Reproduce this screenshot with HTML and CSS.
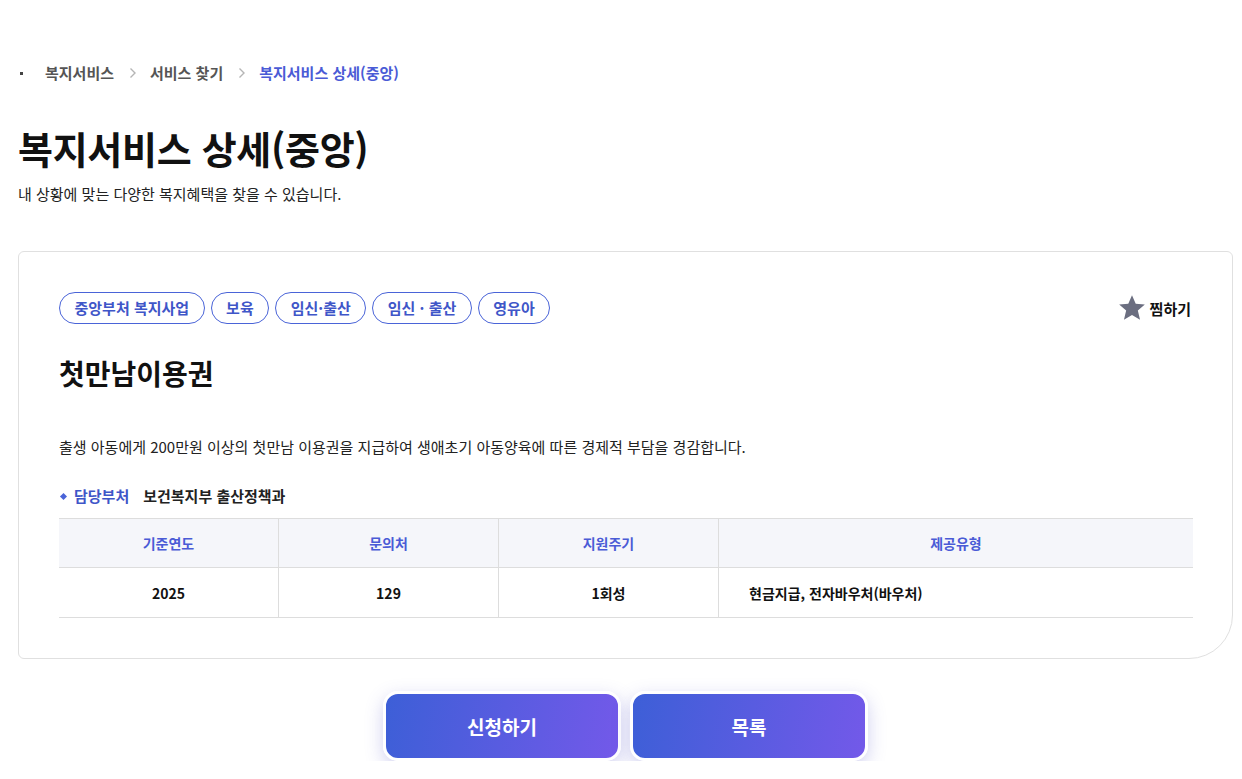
FILE: index.html
```html
<!DOCTYPE html>
<html lang="ko">
<head>
    <meta charset="UTF-8">
    <meta name="viewport" content="width=device-width, initial-scale=1.0">
    <title>복지서비스 상세(중앙)</title>
    <link rel="stylesheet" href="styles.css">
</head>
<body>
    <div class="container">
        <nav class="breadcrumb">
            <span class="home-dot"></span>
            <a href="#">복지서비스</a>
            <svg class="sep" width="8" height="12" viewBox="0 0 8 12"><path d="M1.5 1.5L6 6l-4.5 4.5" fill="none" stroke="#b5b5b5" stroke-width="1.4"/></svg>
            <a href="#">서비스 찾기</a>
            <svg class="sep" width="8" height="12" viewBox="0 0 8 12"><path d="M1.5 1.5L6 6l-4.5 4.5" fill="none" stroke="#b5b5b5" stroke-width="1.4"/></svg>
            <a href="#" class="current">복지서비스 상세(중앙)</a>
        </nav>

        <h1 class="page-title">복지서비스 상세(중앙)</h1>
        <p class="page-desc">내 상황에 맞는 다양한 복지혜택을 찾을 수 있습니다.</p>

        <div class="card">
            <div class="card-top">
                <div class="tags">
                    <span class="tag">중앙부처 복지사업</span>
                    <span class="tag">보육</span>
                    <span class="tag">임신·출산</span>
                    <span class="tag">임신 · 출산</span>
                    <span class="tag">영유아</span>
                </div>
                <button class="fav">
                    <svg width="28" height="28" viewBox="0 0 24 24"><path d="M12 1l3.2 7.4 7.8.6-6 5.2 1.9 7.8L12 17.9 5.1 22l1.9-7.8-6-5.2 7.8-.6z" fill="#6b6e80"/></svg>
                    찜하기
                </button>
            </div>

            <h2 class="service-name">첫만남이용권</h2>
            <p class="service-desc">출생 아동에게 200만원 이상의 첫만남 이용권을 지급하여 생애초기 아동양육에 따른 경제적 부담을 경감합니다.</p>

            <div class="dept">
                <span class="dept-label">담당부처</span>
                <span class="dept-name">보건복지부 출산정책과</span>
            </div>

            <table class="info-table">
                <thead>
                    <tr>
                        <th class="c1">기준연도</th>
                        <th class="c2">문의처</th>
                        <th class="c3">지원주기</th>
                        <th>제공유형</th>
                    </tr>
                </thead>
                <tbody>
                    <tr>
                        <td>2025</td>
                        <td>129</td>
                        <td>1회성</td>
                        <td class="left">현금지급, 전자바우처(바우처)</td>
                    </tr>
                </tbody>
            </table>
        </div>

        <div class="actions">
            <button class="btn">신청하기</button>
            <button class="btn">목록</button>
        </div>
    </div>
</body>
</html>
```

FILE: styles.css
```css
body {
    font-family: "Noto Sans CJK KR", "Noto Sans", sans-serif;
    margin: 0;
    padding: 0;
    background-color: #ffffff;
    color: #111111;
}
.container {
    padding: 63px 9px 0 18px;
}
.breadcrumb {
    display: flex;
    align-items: center;
    font-size: 15px;
    line-height: 20px;
    font-weight: 700;
}
.breadcrumb a {
    color: #555555;
    text-decoration: none;
}
.breadcrumb a.current {
    color: #4a5bd6;
}
.home-dot {
    width: 3px;
    height: 3px;
    background-color: #444444;
    margin: 0 22px 0 2px;
}
.sep {
    margin: 0 13px 0 15px;
}
.page-title {
    margin: 42px 0 0;
    font-size: 38px;
    line-height: 46px;
    font-weight: 700;
    letter-spacing: -0.3px;
}
.page-desc {
    margin: 13px 0 0;
    font-size: 15px;
    line-height: 20px;
    color: #222222;
}
.card {
    margin-top: 47px;
    border: 1px solid #e0e0e0;
    border-radius: 6px 6px 44px 6px;
    padding: 40px 39px 40px 40px;
}
.card-top {
    display: flex;
    justify-content: space-between;
    align-items: center;
}
.tags {
    display: flex;
    gap: 6px;
}
.tag {
    height: 30px;
    line-height: 30px;
    padding: 0 14.5px;
    border: 1px solid #4a64d8;
    border-radius: 16px;
    color: #3f56c8;
    font-size: 15px;
    font-weight: 700;
}
.fav {
    display: flex;
    align-items: center;
    gap: 4px;
    background: none;
    border: none;
    padding: 0 2px 0 0;
    font-family: inherit;
    font-size: 15px;
    font-weight: 700;
    color: #111111;
    cursor: pointer;
}
.service-name {
    margin: 29px 0 0;
    font-size: 28px;
    line-height: 40px;
    font-weight: 700;
}
.service-desc {
    margin: 43px 0 0;
    font-size: 15px;
    line-height: 22px;
    color: #222222;
}
.dept {
    margin-top: 27px;
    display: flex;
    align-items: center;
    font-size: 15px;
    line-height: 22px;
    font-weight: 700;
}
.dept-label {
    color: #3f56c8;
    padding-left: 15px;
    position: relative;
}
.dept-label::before {
    content: "";
    position: absolute;
    left: 2px;
    top: 9px;
    width: 5px;
    height: 5px;
    background-color: #4a64d8;
    transform: rotate(45deg);
}
.dept-name {
    margin-left: 14px;
    color: #222222;
}
.info-table {
    width: 100%;
    margin-top: 11px;
    border-collapse: collapse;
    font-size: 14px;
}
.info-table th, .info-table td {
    height: 49px;
    padding: 0;
    text-align: center;
    border-bottom: 1px solid #dddddd;
    border-left: 1px solid #dddddd;
}
.info-table th {
    height: 48px;
}
.info-table th:first-child, .info-table td:first-child {
    border-left: none;
}
.info-table th {
    background-color: #f5f6fa;
    color: #4a5bd6;
    font-weight: 700;
    border-top: 1px solid #dddddd;
}
.info-table td {
    color: #111111;
    font-weight: 700;
}
.info-table .c1, .info-table .c2, .info-table .c3 {
    width: 219px;
}
.info-table td.left {
    text-align: left;
    padding-left: 30px;
}
.actions {
    display: flex;
    justify-content: center;
    gap: 9px;
    margin-top: 32px;
}
.btn {
    width: 238px;
    height: 70px;
    border: 3px solid #ffffff;
    border-radius: 15px;
    background: linear-gradient(100deg, #3d5fd7, #7359e9);
    color: #ffffff;
    font-family: inherit;
    font-size: 19px;
    font-weight: 700;
    box-shadow: 0 6px 18px rgba(90, 90, 200, 0.28);
    cursor: pointer;
}
```
